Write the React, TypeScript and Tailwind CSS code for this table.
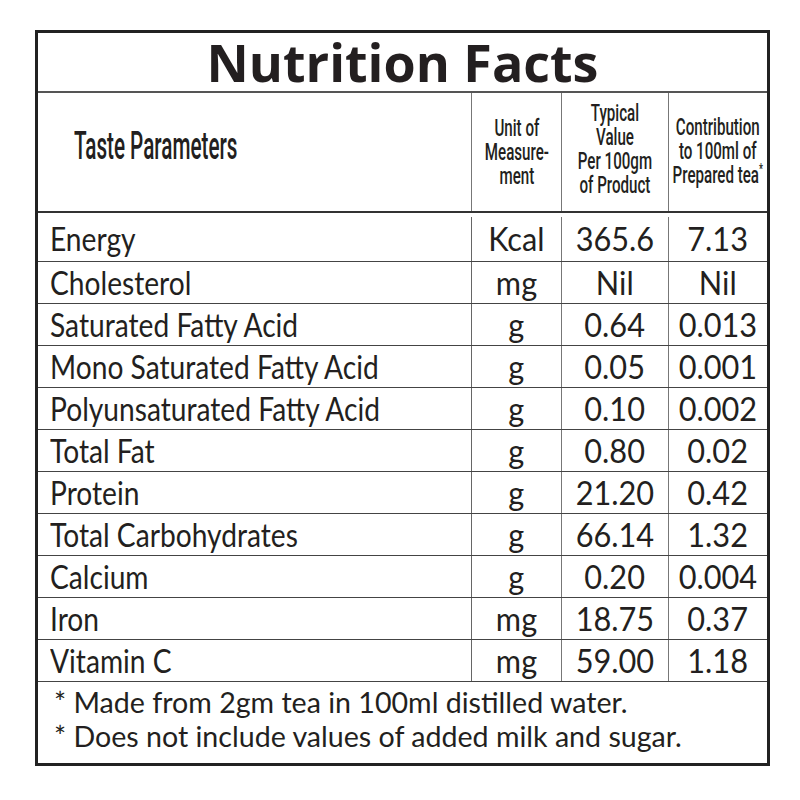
import React from 'react'

const rows = [
  ['Energy', 'Kcal', '365.6', '7.13'],
  ['Cholesterol', 'mg', 'Nil', 'Nil'],
  ['Saturated Fatty Acid', 'g', '0.64', '0.013'],
  ['Mono Saturated Fatty Acid', 'g', '0.05', '0.001'],
  ['Polyunsaturated Fatty Acid', 'g', '0.10', '0.002'],
  ['Total Fat', 'g', '0.80', '0.02'],
  ['Protein', 'g', '21.20', '0.42'],
  ['Total Carbohydrates', 'g', '66.14', '1.32'],
  ['Calcium', 'g', '0.20', '0.004'],
  ['Iron', 'mg', '18.75', '0.37'],
  ['Vitamin C', 'mg', '59.00', '1.18'],
]

const dataFont = { fontFamily: 'Lato, "Noto Sans", sans-serif' }
const headFont = { fontFamily: 'Roboto, "Liberation Sans", sans-serif' }

const HeadCell = ({ children, last = false }: { children: React.ReactNode; last?: boolean }) => (
  <div className={`flex items-center justify-center overflow-visible ${last ? '' : 'border-r border-[#777]'}`}>
    <div
      className="shrink-0 inline-block whitespace-nowrap text-center text-[24px] leading-[24px] font-medium text-[#231f20] scale-x-[0.63] origin-center"
      style={headFont}
    >
      {children}
    </div>
  </div>
)

export default function App() {
  return (
    <div className="min-h-screen bg-white pt-[30px] pl-[35px]">
      <div className="w-[735px] h-[736px] border-[3px] border-[#222] flex flex-col text-[#231f20]">
        {/* title */}
        <div className="h-[60px] shrink-0 border-b-2 border-[#555] flex items-center justify-center">
          <h1
            className="text-[52px] font-bold leading-none"
            style={{ fontFamily: '"Open Sans", sans-serif' }}
          >
            Nutrition Facts
          </h1>
        </div>

        {/* header */}
        <div className="h-[120px] shrink-0 grid grid-cols-[434px_90px_107px_98px] border-b-2 border-[#333]">
          <div className="flex items-center pl-[36px] pb-[12px] border-r border-[#777]">
            <span
              className="inline-block whitespace-nowrap text-[39px] leading-none font-medium scale-x-[0.53] origin-left"
              style={headFont}
            >
              Taste Parameters
            </span>
          </div>
          <HeadCell>
            Unit of
            <br />
            Measure-
            <br />
            ment
          </HeadCell>
          <HeadCell>
            <div className="pb-[6px]">
              Typical
              <br />
              Value
              <br />
              Per 100gm
              <br />
              of Product
            </div>
          </HeadCell>
          <HeadCell last>
            Contribution
            <br />
            to 100ml of
            <br />
            Prepared tea<span className="text-[14px] relative top-[-9px]">*</span>
          </HeadCell>
        </div>

        {/* data rows */}
        {rows.map((r, i) => (
          <div
            key={r[0]}
            className={`${i === 0 ? 'h-[49px] pt-[4px]' : 'h-[42px]'} shrink-0 grid grid-cols-[434px_90px_107px_98px] border-b border-[#444]`}
            style={dataFont}
          >
            <div className="flex items-center pl-[12px] border-r border-[#666]">
              <span className="inline-block whitespace-nowrap text-[32px] leading-none scale-x-[0.88] origin-left">
                {r[0]}
              </span>
            </div>
            {r.slice(1).map((v, j) => (
              <div
                key={j}
                className={`flex items-center justify-center ${j < 2 ? 'border-r border-[#777]' : ''}`}
              >
                <span className="shrink-0 inline-block whitespace-nowrap text-[32px] leading-none scale-x-[0.96] origin-center">
                  {v}
                </span>
              </div>
            ))}
          </div>
        ))}

        {/* footnotes */}
        <div className="flex-1 pt-[3px] pl-[16px] text-[28.6px] leading-[34px]" style={dataFont}>
          <p>* Made from 2gm tea in 100ml distilled water.</p>
          <p>* Does not include values of added milk and sugar.</p>
        </div>
      </div>
    </div>
  )
}
